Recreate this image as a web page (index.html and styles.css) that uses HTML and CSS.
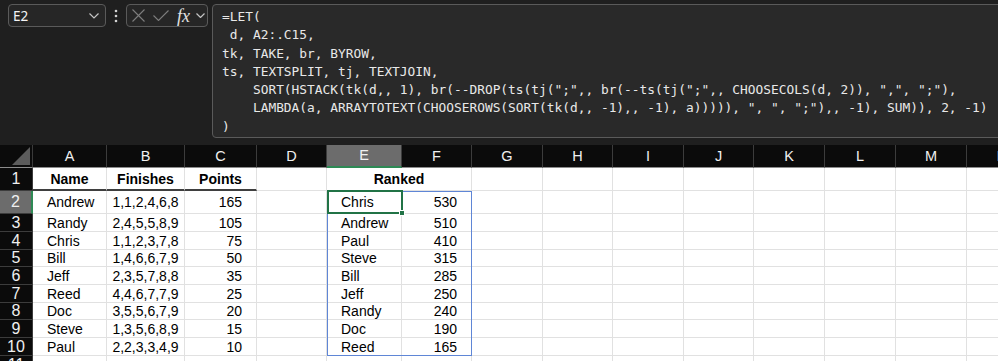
FILE: index.html
```html
<html>
  <head>
    <title>Ranked</title>
    <link rel="stylesheet" href="styles.css">
  </head>

  <body>
    <div class="bar">
      <div class="name-box">
        <span>E2</span>
        <svg class="chevron" width="10" height="6" viewBox="0 0 10 6"><path d="M0.5 0.5 L5 5 L9.5 0.5"/></svg>
      </div>

      <div class="kebab">
        <svg width="4" height="14" viewBox="0 0 4 14"><circle cx="2" cy="2" r="1.3"/><circle cx="2" cy="7" r="1.3"/><circle cx="2" cy="12" r="1.3"/></svg>
      </div>

      <div class="buttons">
        <svg class="icon-x" width="13" height="13" viewBox="0 0 13 13"><path d="M0.5 0.5 L12.5 12.5 M12.5 0.5 L0.5 12.5"/></svg>
        <svg class="icon-check" width="16" height="11" viewBox="0 0 16 11"><path d="M0.5 5.5 L5.5 10.5 L15.5 0.5"/></svg>
        <span class="fx">fx</span>
        <svg class="chevron" width="9" height="5" viewBox="0 0 9 5"><path d="M0.5 0.5 L4.5 4.5 L8.5 0.5"/></svg>
      </div>

      <div class="formula">
<pre>=LET(
 d, A2:.C15,
tk, TAKE, br, BYROW,
ts, TEXTSPLIT, tj, TEXTJOIN,
    SORT(HSTACK(tk(d,, 1), br(--DROP(ts(tj(";",, br(--ts(tj(";",, CHOOSECOLS(d, 2)), ",", ";"),
    LAMBDA(a, ARRAYTOTEXT(CHOOSEROWS(SORT(tk(d,, -1),, -1), a))))), ", ", ";"),, -1), SUM)), 2, -1)
)</pre>
      </div>
    </div>

    <div class="sheet-frame">
      <div id="sheet" class="sheet"></div>
    </div>

    <script>
      "use strict";

      let letters = "ABCDEFGHIJKLMN".split("");

      let players = [
        ["Andrew", "1,1,2,4,6,8", 165],
        ["Randy", "2,4,5,5,8,9", 105],
        ["Chris", "1,1,2,3,7,8", 75],
        ["Bill", "1,4,6,6,7,9", 50],
        ["Jeff", "2,3,5,7,8,8", 35],
        ["Reed", "4,4,6,7,7,9", 25],
        ["Doc", "3,5,5,6,7,9", 20],
        ["Steve", "1,3,5,6,8,9", 15],
        ["Paul", "2,2,3,3,4,9", 10]
      ];

      let ranked = [
        ["Chris", 530], ["Andrew", 510], ["Paul", 410],
        ["Steve", 315], ["Bill", 285], ["Jeff", 250],
        ["Randy", 240], ["Doc", 190], ["Reed", 165]
      ];

      let sheet = document.querySelector("#sheet");

      function addCell(text, className) {
        let cell = document.createElement("div");
        cell.className = "cell " + (className || "");
        cell.textContent = text;
        sheet.appendChild(cell);
        return cell;
      }

      // column headers
      addCell("", "corner");
      for (let letter of letters) {
        addCell(letter, letter === "E" ? "col-head active" : "col-head");
      }

      for (let row = 1; row <= 11; row++) {
        addCell(row, row === 2 ? "row-head active" : "row-head");

        let player = players[row - 2];
        let rank = ranked[row - 2];

        if (row === 1) {
          addCell("Name", "title");
          addCell("Finishes", "title");
          addCell("Points", "title");
          addCell("");
          addCell("Ranked", "ranked");
        } else if (player) {
          addCell(player[0], "left");
          addCell(player[1], "center");
          addCell(player[2], "right");
          addCell("");

          let nameCell = addCell(rank[0], "left");
          addCell(rank[1], "right");

          if (row === 2) {
            nameCell.classList.add("anchor");
            nameCell.innerHTML += '<div class="spill"></div><div class="selection"><span class="handle"></span></div>';
          }
        } else {
          for (let i = 0; i < 6; i++) addCell("");
        }

        // G..N
        for (let i = 0; i < 8; i++) addCell("");
      }
    </script>
  </body>
</html>
```

FILE: styles.css
```css
*, *:before, *:after {
  box-sizing: border-box;
  padding: 0;
  margin: 0;
}

html, body {
  overflow: hidden;
  background: #1f1f1f;
}

/* formula bar */

.bar {
  display: flex;
  align-items: flex-start;
  height: 145px;
  padding: 4px 0 0 8px;
  background: #1f1f1f;
}

.name-box {
  display: flex;
  align-items: center;
  justify-content: space-between;
  width: 98px;
  height: 23px;
  padding: 0 6px 0 4px;
  border: 1px solid #5a5a5a;
  border-radius: 4px;
  background: #262626;
  color: #f4f4f4;
  font-family: "Noto Sans", sans-serif;
  font-size: 13.5px;
}

.chevron path {
  fill: none;
  stroke: #c4c4c4;
  stroke-width: 1.2;
}

.kebab {
  display: flex;
  justify-content: center;
  width: 20px;
  padding-top: 5px;
}

.kebab circle {
  fill: #d2d2d2;
}

.buttons {
  display: flex;
  align-items: center;
  width: 82px;
  height: 23px;
  padding-left: 5px;
  border: 1px solid #5a5a5a;
  border-radius: 4px;
  background: #262626;
}

.icon-x, .icon-check {
  fill: none;
  stroke: #7d7d7d;
  stroke-width: 1.1;
}

.icon-x {
  margin-right: 8px;
}

.icon-check {
  margin-right: 8px;
}

.fx {
  width: 19px;
  color: #e2e2e2;
  font-family: "Liberation Serif", serif;
  font-style: italic;
  font-size: 18px;
  line-height: 1;
}

.formula {
  flex: 1;
  height: 134px;
  margin-left: 4px;
  margin-right: -10px;
  padding: 3px 9px;
  border: 1px solid #5a5a5a;
  border-radius: 4px 0 0 4px;
  background: #292929;
}

.formula pre {
  color: #e8e8e8;
  font-family: "DejaVu Sans Mono", monospace;
  font-size: 12.85px;
  line-height: 18.3px;
}

/* sheet */

.sheet-frame {
  overflow: hidden;
}

.sheet {
  display: grid;
  grid-template-columns: 33px 74px 78px 72px 70px 75px 70px 71px 70px 71px 70px 71px 71px 71px 71px;
  grid-template-rows: 23px 23px 23px 18px 18px 17px 18px 18px 17px 18px 18px 18px;
  width: max-content;
  background: #ffffff;
  font-family: "Liberation Sans", Arial, sans-serif;
  font-size: 14px;
  color: #000;
}

.cell {
  display: flex;
  align-items: center;
  padding: 0 14px;
  border-right: 1px solid #e1e1e1;
  border-bottom: 1px solid #e1e1e1;
  white-space: nowrap;
  line-height: 1;
}

.corner {
  position: relative;
  background: #0b0b0b;
  border-right: 1px solid #3a3a3a;
  border-bottom: 1px solid #8c8c8c;
}

.corner::after {
  content: '';
  position: absolute;
  right: 2px;
  bottom: 2px;
  border-style: solid;
  border-width: 0 0 18px 18px;
  border-color: transparent transparent #5c5c5c transparent;
}

.col-head {
  justify-content: center;
  padding: 0;
  background: #0b0b0b;
  color: #f0f0f0;
  font-size: 14.5px;
  border-right: 1px solid #3c3c3c;
  border-bottom: 1px solid #8c8c8c;
}

.row-head {
  justify-content: center;
  padding: 0;
  background: #0b0b0b;
  color: #f0f0f0;
  font-size: 16px;
  border-right: 1px solid #3c3c3c;
  border-bottom: 1px solid #3c3c3c;
}

.col-head.active {
  background: #6c6c6c;
  border-bottom: 2px solid #2e8a55;
}

.row-head.active {
  background: #6c6c6c;
  border-right: 2px solid #2e8a55;
}

.title {
  justify-content: center;
  font-weight: bold;
  border-bottom: 2px solid #3f3f3f;
}

.ranked {
  grid-column: span 2;
  justify-content: center;
  font-weight: bold;
}

.left {
  justify-content: flex-start;
}

.center {
  justify-content: center;
  padding: 0;
}

.right {
  justify-content: flex-end;
}

.anchor {
  position: relative;
}

.spill {
  position: absolute;
  top: 0;
  left: 0;
  width: 145px;
  height: 165px;
  border: 1px solid #5f86d6;
}

.selection {
  position: absolute;
  top: -1px;
  left: 0;
  width: 76px;
  height: 24px;
  border: 2px solid #217346;
}

.handle {
  position: absolute;
  right: -4px;
  bottom: -4px;
  width: 6px;
  height: 6px;
  background: #217346;
  border: 1px solid #ffffff;
}
```
